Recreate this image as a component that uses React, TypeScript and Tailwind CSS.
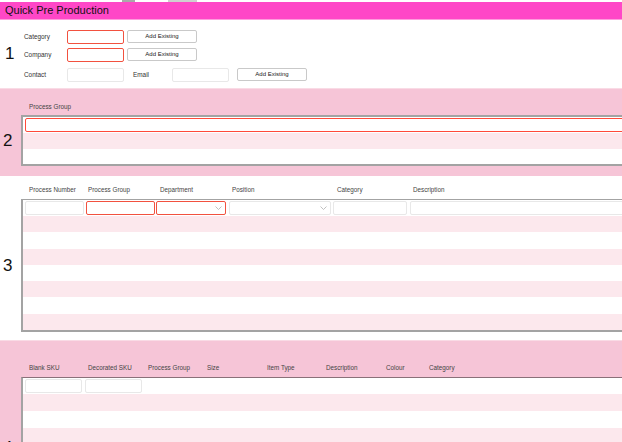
import React from 'react';

const font = { fontFamily: '"Liberation Sans", Arial, sans-serif' };

const Chevron: React.FC<{ className?: string }> = ({ className }) => (
  <svg className={className} width="7" height="4" viewBox="0 0 7 4" fill="none">
    <polyline points="0.5,0.5 3.5,3.5 6.5,0.5" stroke="#b0b0b0" strokeWidth="0.8" />
  </svg>
);

const Field: React.FC<{ w: string; red?: boolean; chevron?: boolean; className?: string }> = ({
  w,
  red,
  chevron,
  className,
}) => (
  <div
    className={`${w} h-[14px] shrink-0 bg-white rounded-[2px] border flex items-center justify-end pr-[3px] ${
      red ? 'border-[#f2513f]' : 'border-[#e8e8e8]'
    } ${className ?? ''}`}
  >
    {chevron && <Chevron />}
  </div>
);

const Btn: React.FC<{ className?: string }> = ({ className }) => (
  <div
    className={`w-[70px] h-[13px] shrink-0 bg-white border border-[#c9c9c9] rounded-[2px] flex items-center justify-center text-[6px] text-[#222] ${className ?? ''}`}
  >
    Add Existing
  </div>
);

const Digit: React.FC<{ n: number }> = ({ n }) => (
  <div className="w-[21px] shrink-0 flex items-center pl-[3px] text-[17px] leading-none text-[#111]">{n}</div>
);

const App: React.FC = () => {
  const stripes3 = [1, 0, 1, 0, 1, 0, 1];
  const stripes4 = [1, 0, 1];

  return (
    <div className="w-[622px] h-[442px] overflow-hidden bg-white flex flex-col" style={font}>
      {/* top strip */}
      <div className="h-[2px] shrink-0 flex">
        <div className="w-[122px]" />
        <div className="w-[13px] bg-[#a9a9a9]" />
        <div className="w-[33px]" />
        <div className="w-[29px] bg-[#cfcfcf]" />
      </div>

      {/* header */}
      <div className="h-[18px] shrink-0 bg-[#ff47c7] border-b border-[#ff9ede] px-[5px] text-[11px] leading-[17px] text-[#111]">
        Quick Pre Production
      </div>

      {/* section 1 */}
      <div className="h-[68px] shrink-0 flex pt-[10px]">
        <div className="w-[24px] shrink-0 pl-[5px] pt-[15px] text-[17px] leading-none text-[#111]">1</div>
        <div className="flex flex-col text-[6.4px] text-[#333]">
          <div className="flex items-center h-[13px]">
            <div className="w-[43px]">Category</div>
            <Field w="w-[57px]" red />
            <Btn className="ml-[3px]" />
          </div>
          <div className="flex items-center h-[13px] mt-[5px]">
            <div className="w-[43px]">Company</div>
            <Field w="w-[57px]" red />
            <Btn className="ml-[3px]" />
          </div>
          <div className="flex items-center h-[13px] mt-[7px]">
            <div className="w-[43px]">Contact</div>
            <Field w="w-[57px]" />
            <div className="w-[48px] pl-[9px]">Email</div>
            <Field w="w-[57px]" />
            <Btn className="ml-[8px]" />
          </div>
        </div>
      </div>

      {/* section 2 */}
      <div className="h-[88px] shrink-0 bg-[#f6c5d7] border-t border-[#f9dbe5] flex flex-col">
        <div className="h-[26px] pl-[29px] pt-[13px] text-[6.3px] text-[#444]">Process Group</div>
        <div className="flex">
          <Digit n={2} />
          <div className="flex-1 h-[51px] bg-white border-t-2 border-b-2 border-l-2 border-[#a3a3a3] flex flex-col">
            <div className="h-[16px] pl-[2px] pt-[1px]">
              <div className="h-[14px] w-[610px] bg-white rounded-[2px] border border-[#ff4a3a]" />
            </div>
            <div className="h-[16px] bg-[#fce8ed]" />
            <div className="flex-1 bg-white" />
          </div>
        </div>
      </div>

      {/* section 3 */}
      <div className="h-[164px] shrink-0 bg-white flex flex-col">
        <div className="h-[23px] flex items-end pb-[5px] text-[6.3px] text-[#444]">
          <div className="w-[88px] pl-[29px] shrink-0">Process Number</div>
          <div className="w-[72px] shrink-0">Process Group</div>
          <div className="w-[72px] shrink-0">Department</div>
          <div className="w-[105px] shrink-0">Position</div>
          <div className="w-[76px] shrink-0">Category</div>
          <div>Description</div>
        </div>
        <div className="flex">
          <Digit n={3} />
          <div className="flex-1 h-[133px] border-t border-b-2 border-l-2 border-[#a3a3a3] flex flex-col">
            <div className="h-[16px] flex items-center pl-[2px]">
              <Field w="w-[59px]" />
              <Field w="w-[69px]" red className="ml-[2px]" />
              <Field w="w-[70px]" red chevron className="ml-[1px]" />
              <Field w="w-[102px]" chevron className="ml-[3px]" />
              <Field w="w-[74px]" className="ml-[2px]" />
              <Field w="flex-1" className="ml-[3px] mr-[-4px]" />
            </div>
            {stripes3.map((p, i) => (
              <div key={i} className={`flex-1 ${p ? 'bg-[#fce8ed]' : 'bg-white'}`} />
            ))}
          </div>
        </div>
        <div className="flex-1" />
      </div>

      {/* section 4 */}
      <div className="flex-1 bg-[#f6c5d7] border-t border-[#f9dbe5] flex flex-col">
        <div className="h-[36px] shrink-0 flex items-end pb-[5px] text-[6.3px] text-[#444]">
          <div className="w-[88px] pl-[29px] shrink-0">Blank SKU</div>
          <div className="w-[60px] shrink-0">Decorated SKU</div>
          <div className="w-[59px] shrink-0">Process Group</div>
          <div className="w-[60px] shrink-0">Size</div>
          <div className="w-[59px] shrink-0">Item Type</div>
          <div className="w-[60px] shrink-0">Description</div>
          <div className="w-[43px] shrink-0">Colour</div>
          <div>Category</div>
        </div>
        <div className="flex flex-1">
          <div className="w-[21px] shrink-0 flex items-end pl-[3px] text-[17px] leading-none text-[#111] translate-y-[11px]">4</div>
          <div className="flex-1 border-t border-l-2 border-t-[#8a7079] border-l-[#a3a3a3] flex flex-col">
            <div className="h-[16px] bg-white flex items-center gap-[3px] pl-[2px]">
              <Field w="w-[57px]" />
              <Field w="w-[57px]" />
            </div>
            {stripes4.map((p, i) => (
              <div key={i} className={`h-[17px] shrink-0 ${p ? 'bg-[#fce8ed]' : 'bg-white'}`} />
            ))}
          </div>
        </div>
      </div>
    </div>
  );
};

export default App;
